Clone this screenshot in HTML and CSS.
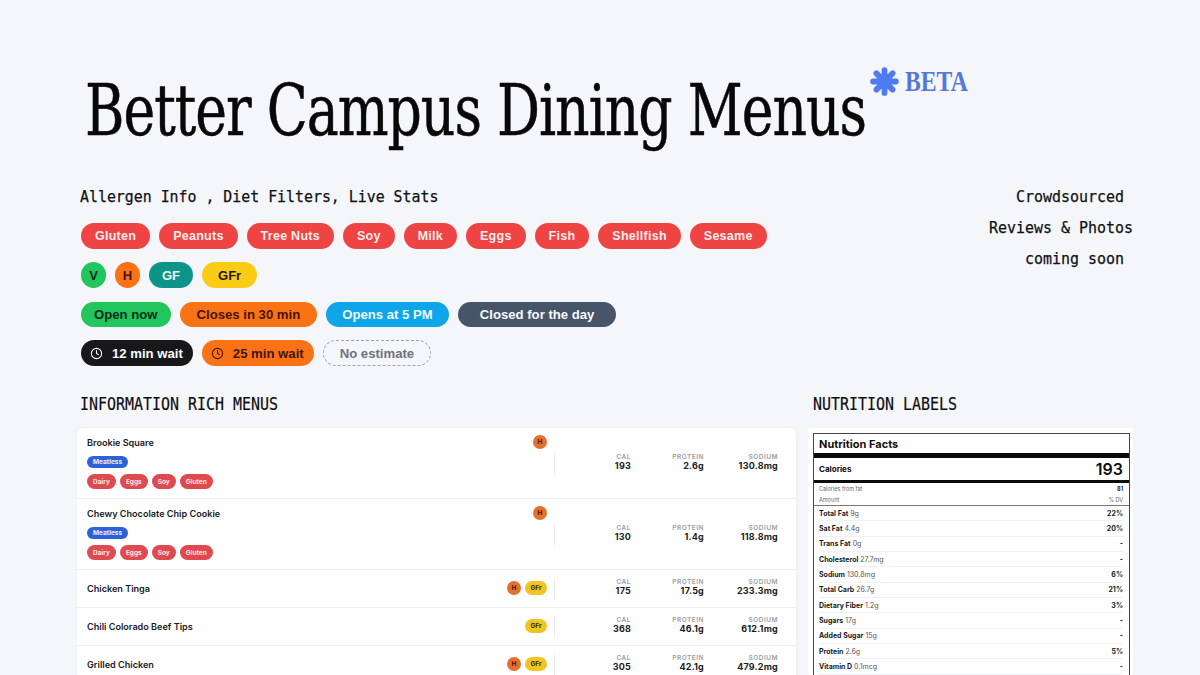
FILE: index.html
```html
<!DOCTYPE html>
<html lang="en">
<head>
<meta charset="utf-8">
<title>Better Campus Dining Menus</title>
<link rel="stylesheet" href="styles.css">
</head>
<body>
<div class="page">
  <header class="hero">
    <h1>Better Campus Dining Menus</h1>
    <div class="beta">
      <svg class="star" viewBox="0 0 28 28" aria-hidden="true"><path d="M14 3v22M3 14h22M6.2 6.2l15.6 15.6M21.8 6.2L6.2 21.8"/></svg>
      <span class="beta-text">BETA</span>
    </div>
  </header>
  <section class="features">
    <div class="feature-main">
      <p class="tagline">Allergen Info , Diet Filters, Live Stats</p>
      <div class="pills allergens">
        <span class="pill red">Gluten</span><span class="pill red">Peanuts</span><span class="pill red">Tree Nuts</span><span class="pill red">Soy</span><span class="pill red">Milk</span><span class="pill red">Eggs</span><span class="pill red">Fish</span><span class="pill red">Shellfish</span><span class="pill red">Sesame</span>
      </div>
      <div class="pills diets">
        <span class="pill round green">V</span><span class="pill round orange">H</span><span class="pill teal">GF</span><span class="pill yellow">GFr</span>
      </div>
      <div class="pills status">
        <span class="pill green">Open now</span><span class="pill orange">Closes in 30 min</span><span class="pill sky">Opens at 5 PM</span><span class="pill slate">Closed for the day</span>
      </div>
      <div class="pills waits">
        <span class="pill dark"><svg class="clock" viewBox="0 0 24 24"><circle cx="12" cy="12" r="9.5"/><path d="M12 6.5V12l3.5 2"/></svg>12 min wait</span>
        <span class="pill orange"><svg class="clock" viewBox="0 0 24 24"><circle cx="12" cy="12" r="9.5"/><path d="M12 6.5V12l3.5 2"/></svg>25 min wait</span>
        <span class="pill none">No estimate</span>
      </div>
    </div>
    <p class="soon">Crowdsourced&nbsp;<br>Reviews &amp; Photos<br>coming soon&nbsp;</p>
  </section>
  <section class="columns">
    <div class="menus">
      <h2>INFORMATION RICH MENUS</h2>
      <div class="card">
        <div class="row">
          <div class="item">
            <div class="item-top"><span class="name">Brookie Square</span><span class="badges"><i class="b h">H</i></span></div>
            <div class="tags"><span class="tag blue">Meatless</span></div>
            <div class="tags"><span class="tag redt">Dairy</span><span class="tag redt">Eggs</span><span class="tag redt">Soy</span><span class="tag redt">Gluten</span></div>
          </div>
          <div class="stats">
            <div class="stat s1"><small>CAL</small><b>193</b></div>
            <div class="stat s2"><small>PROTEIN</small><b>2.6g</b></div>
            <div class="stat s3"><small>SODIUM</small><b>130.8mg</b></div>
          </div>
        </div>
        <div class="row">
          <div class="item">
            <div class="item-top"><span class="name">Chewy Chocolate Chip Cookie</span><span class="badges"><i class="b h">H</i></span></div>
            <div class="tags"><span class="tag blue">Meatless</span></div>
            <div class="tags"><span class="tag redt">Dairy</span><span class="tag redt">Eggs</span><span class="tag redt">Soy</span><span class="tag redt">Gluten</span></div>
          </div>
          <div class="stats">
            <div class="stat s1"><small>CAL</small><b>130</b></div>
            <div class="stat s2"><small>PROTEIN</small><b>1.4g</b></div>
            <div class="stat s3"><small>SODIUM</small><b>118.8mg</b></div>
          </div>
        </div>
        <div class="row">
          <div class="item">
            <div class="item-top"><span class="name">Chicken Tinga</span><span class="badges"><i class="b h">H</i><i class="b y">GFr</i></span></div>
          </div>
          <div class="stats">
            <div class="stat s1"><small>CAL</small><b>175</b></div>
            <div class="stat s2"><small>PROTEIN</small><b>17.5g</b></div>
            <div class="stat s3"><small>SODIUM</small><b>233.3mg</b></div>
          </div>
        </div>
        <div class="row">
          <div class="item">
            <div class="item-top"><span class="name">Chili Colorado Beef Tips</span><span class="badges"><i class="b y">GFr</i></span></div>
          </div>
          <div class="stats">
            <div class="stat s1"><small>CAL</small><b>368</b></div>
            <div class="stat s2"><small>PROTEIN</small><b>46.1g</b></div>
            <div class="stat s3"><small>SODIUM</small><b>612.1mg</b></div>
          </div>
        </div>
        <div class="row">
          <div class="item">
            <div class="item-top"><span class="name">Grilled Chicken</span><span class="badges"><i class="b h">H</i><i class="b y">GFr</i></span></div>
          </div>
          <div class="stats">
            <div class="stat s1"><small>CAL</small><b>305</b></div>
            <div class="stat s2"><small>PROTEIN</small><b>42.1g</b></div>
            <div class="stat s3"><small>SODIUM</small><b>479.2mg</b></div>
          </div>
        </div>
      </div>
    </div>
    <div class="labels">
      <h2>NUTRITION LABELS</h2>
      <div class="label-card">
        <div class="facts">
          <div class="facts-title">Nutrition Facts</div>
          <div class="facts-cal"><b>Calories</b><strong>193</strong></div>
          <div class="mini"><span>Calories from fat</span><b>81</b></div>
          <div class="mini amount"><span>Amount</span><span>% DV</span></div>
          <div class="nrow"><span><b>Total Fat</b> 9g</span><b>22%</b></div>
          <div class="nrow"><span><b>Sat Fat</b> 4.4g</span><b>20%</b></div>
          <div class="nrow"><span><b>Trans Fat</b> 0g</span><b>-</b></div>
          <div class="nrow"><span><b>Cholesterol</b> 27.7mg</span><b>-</b></div>
          <div class="nrow"><span><b>Sodium</b> 130.8mg</span><b>6%</b></div>
          <div class="nrow"><span><b>Total Carb</b> 26.7g</span><b>21%</b></div>
          <div class="nrow"><span><b>Dietary Fiber</b> 1.2g</span><b>3%</b></div>
          <div class="nrow"><span><b>Sugars</b> 17g</span><b>-</b></div>
          <div class="nrow"><span><b>Added Sugar</b> 15g</span><b>-</b></div>
          <div class="nrow"><span><b>Protein</b> 2.6g</span><b>5%</b></div>
          <div class="nrow"><span><b>Vitamin D</b> 0.1mcg</span><b>-</b></div>
        </div>
      </div>
    </div>
  </section>
</div>
</body>
</html>
```
FILE: styles.css
```css
* { box-sizing: border-box; }
html, body { margin: 0; height: 675px; overflow: hidden; }
body { background: #f5f6fa; color: #0b0b0c; font-family: "Liberation Sans", Arial, sans-serif; }
.page { padding: 0 67px 0 80px; height: 675px; overflow: hidden; }

.hero { display: flex; align-items: flex-start; height: 178px; padding: 69px 0 0 5px; }
h1 { margin: 0; width: 785px; font: 400 71px/84px "DejaVu Serif Condensed", "DejaVu Serif", serif; color: #080808; white-space: nowrap; letter-spacing: -1.2px; transform: scaleX(.84); transform-origin: left center; -webkit-text-stroke: .5px #080808; }
.beta { display: flex; align-items: center; gap: 6px; margin-top: -3px; color: #5478d8; font: 700 30px/30px "Liberation Serif", serif; }
.beta-text { display: inline-block; width: 62px; transform: scaleX(.79); transform-origin: left center; }
.star { width: 29px; height: 29px; fill: none; stroke: #4f7bf0; stroke-width: 5.6; stroke-linecap: round; }

.features { display: flex; justify-content: space-between; height: 216px; }
.tagline, .soon { margin: 0; font: 400 16px/31px "DejaVu Sans Mono", monospace; color: #101012; white-space: pre; -webkit-text-stroke: .25px #101012; }
.tagline { height: 35px; line-height: 17px; transform: scaleX(.93); transform-origin: left center; }
.soon { text-align: right; margin-top: 3px; transform: scaleX(.935); transform-origin: right center; }
.feature-main { padding-top: 10px; }
.pills { display: flex; gap: 9px; padding-left: 1px; margin-bottom: 13px; }
.pill { display: inline-flex; align-items: center; justify-content: center; height: 25px; border-radius: 13px; padding: 0 14px; font-size: 13px; font-weight: 700; white-space: nowrap; }
.allergens .pill { height: 26px; font-size: 12.5px; letter-spacing: .26px; }
.diets .pill { height: 26px; font-size: 13px; }
.diets { margin-bottom: 14px; }
.status .pill, .waits .pill { font-size: 13.15px; padding: 0 15px; }
.status .slate { padding: 0 22px; }
.status .sky { padding: 0 16px; }
.status .orange { padding: 0 17px; }
.status .green { padding: 0 13px; }
.red { background: #ef4444; color: #fdecec; }
.diets .round { width: 25px; padding: 0; }
.green { background: #22c55e; color: #052e16; }
.orange { background: #f97316; color: #431407; }
.teal { background: #0d9488; color: #f0fdfa; padding: 0 13px; }
.yellow { background: #facc15; color: #1c1604; padding: 0 16px; }
.sky { background: #0ea5e9; color: #f0f9ff; }
.slate { background: #475569; color: #f8fafc; }
.dark { background: #18181b; color: #fafafa; }
.none { border: 1px dashed #a1a1aa; color: #71717a; background: transparent; }
.clock { width: 13px; height: 13px; margin-right: 9px; fill: none; stroke: currentColor; stroke-width: 2; stroke-linecap: round; stroke-linejoin: round; }
.waits { gap: 9px; }
.waits .pill { height: 26px; padding: 0 10px 0 9px; }
.waits .none { padding: 0 16px; }

.columns { display: flex; align-items: flex-start; gap: 17px; }
h2 { margin: 0 0 14px; height: 20px; font: 400 17.6px/20px "DejaVu Sans Mono", monospace; color: #0d0d0f; white-space: nowrap; transform: scaleX(.85); transform-origin: left center; -webkit-text-stroke: .2px #0d0d0f; }
.menus { width: 716px; }
.card { margin-left: -3px; width: 719px; background: #fff; border-radius: 6px; box-shadow: 0 0 2px rgba(20,20,40,.08); font-family: Inter, "Liberation Sans", sans-serif; }
.row { display: flex; align-items: center; border-bottom: 1px solid #eceef1; min-height: 38px; padding: 0 18px 0 10px; }
.row:nth-child(-n+2) .stats { margin-top: 2px; }
.item { width: 467px; padding: 7px 7px 9px 0; }
.row:nth-child(n+3) .item { padding: 11px 7px 12px 0; }
.item-top { display: flex; justify-content: space-between; align-items: center; height: 14px; }
.name { font-size: 9.1px; font-weight: 600; color: #1a1a1d; }
.badges { display: flex; gap: 4px; }
.b { display: flex; align-items: center; justify-content: center; height: 14px; min-width: 14px; border-radius: 7px; font-style: normal; font-size: 6.5px; font-weight: 700; }
.b.h { background: #e2702f; color: #4a0f06; }
.b.y { background: #eec525; color: #3a2c05; width: 22px; }
.tags { display: flex; gap: 4px; margin-top: 6px; }
.tags:nth-child(2) { margin-top: 7px; }
.tag { display: inline-flex; align-items: center; height: 15px; border-radius: 8px; padding: 0 6px; font-size: 6.5px; font-weight: 700; color: #fde9e9; }
.tags:nth-child(2) .tag { height: 12px; }
.blue { background: #2b62d9; color: #eaf0ff; }
.redt { background: #de4a4f; }
.stats { display: flex; border-left: 1px solid #eceef1; height: 22px; flex: 1; }
.stat { display: flex; flex-direction: column; align-items: flex-end; text-align: right; }
.stat small { font-size: 6.5px; line-height: 9px; font-weight: 600; letter-spacing: .5px; color: #9a9ca3; }
.stat b { font-size: 9px; line-height: 10px; margin-top: -1px; font-weight: 700; color: #1b1b1e; letter-spacing: .2px; }
.s1 { width: 76px; }
.s2 { width: 73px; }
.s3 { width: 74px; }

.labels { width: 326px; margin-left: -5px; }
.labels h2 { margin-left: 5px; }
.label-card { background: #fff; padding: 5px 3px 0 5px; border-radius: 3px; font-family: Inter, "Liberation Sans", sans-serif; }
.facts { border: 1px solid #44464a; border-bottom: 0; padding: 0 6px 0 5px; }
.facts-title { height: 19px; border-bottom: 5px solid #0b0b0b; margin: 0 -6px 0 -5px; padding: 0 5px; box-sizing: content-box; font-size: 11px; font-weight: 700; line-height: 21px; color: #111; }
.facts-cal { display: flex; justify-content: space-between; align-items: center; height: 22px; border-bottom: 3px solid #0b0b0b; margin: 0 -6px 0 -5px; padding: 0 6px 0 5px; box-sizing: content-box; font-size: 8px; }
.facts-cal strong { font-size: 16px; font-weight: 600; }
.mini { display: flex; justify-content: space-between; height: 12px; font-size: 5.5px; line-height: 12px; color: #666; }
.mini b { color: #222; }
.amount { border-bottom: 1px solid #777; margin: 0 -6px 0 -5px; padding: 0 6px 0 5px; box-sizing: content-box; height: 10px; line-height: 10px; }
.nrow { display: flex; justify-content: space-between; align-items: center; height: 15.35px; font-size: 7px; color: #555; border-bottom: 1px solid #f0f1f3; }
.nrow b { color: #1a1a1d; font-weight: 700; }
```
